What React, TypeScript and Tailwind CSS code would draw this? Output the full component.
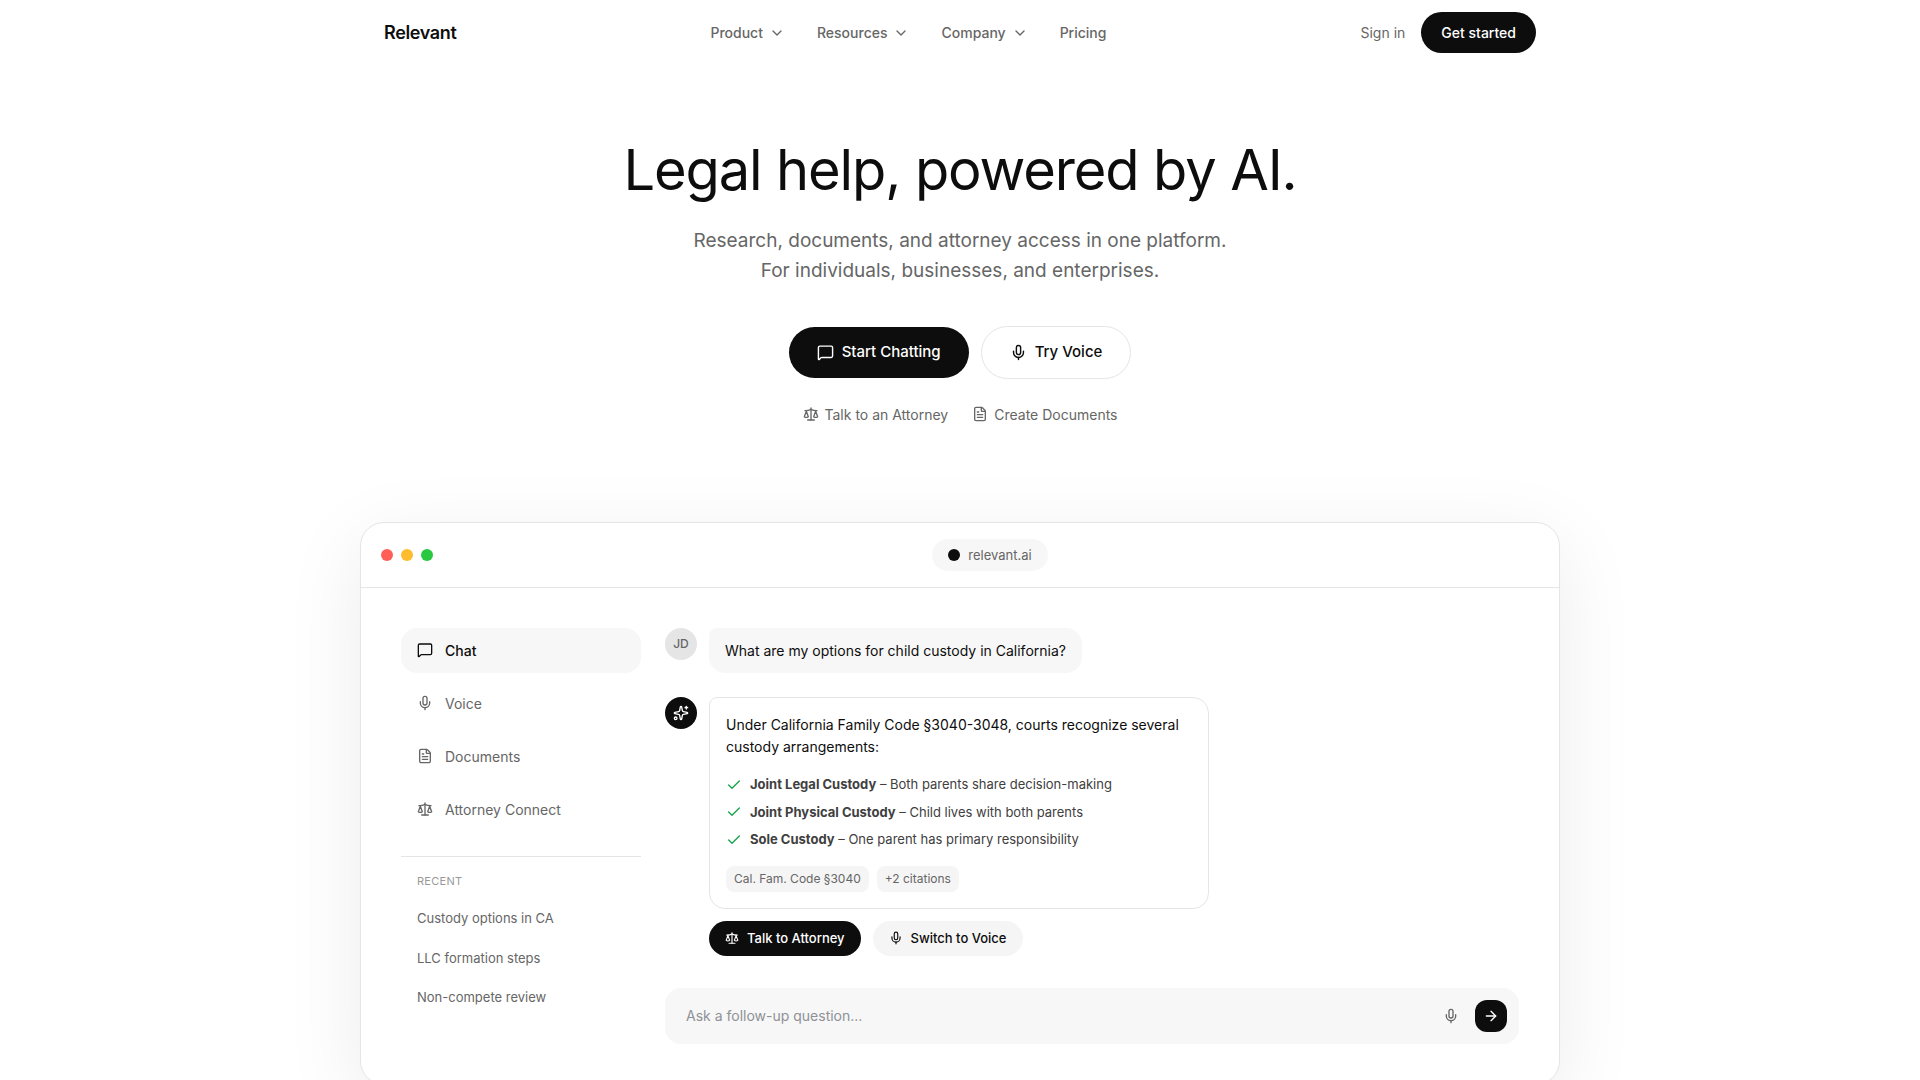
import {
  ArrowRight,
  Check,
  ChevronDown,
  FileText,
  MessageSquare,
  Mic,
  Scale,
  Sparkles,
} from "lucide-react";

const menus = ["Product", "Resources", "Company"];

const sections = [
  { label: "Chat", icon: MessageSquare, active: true },
  { label: "Voice", icon: Mic, active: false },
  { label: "Documents", icon: FileText, active: false },
  { label: "Attorney Connect", icon: Scale, active: false },
];

const recents = ["Custody options in CA", "LLC formation steps", "Non-compete review"];

const arrangements = [
  { name: "Joint Legal Custody", detail: "Both parents share decision-making" },
  { name: "Joint Physical Custody", detail: "Child lives with both parents" },
  { name: "Sole Custody", detail: "One parent has primary responsibility" },
];

function Header() {
  return (
    <header className="mx-auto flex w-full max-w-[1200px] items-center justify-between px-6 py-3">
      <a href="#" className="text-lg font-semibold tracking-[-0.02em]">
        Relevant
      </a>
      <nav className="flex items-center gap-2 text-sm font-medium text-[#666]">
        {menus.map((menu) => (
          <button key={menu} type="button" className="flex items-center gap-1.5 px-3 py-2">
            {menu}
            <ChevronDown className="size-4" />
          </button>
        ))}
        <a href="#" className="px-3 py-2">
          Pricing
        </a>
      </nav>
      <div className="flex items-center gap-4 text-sm">
        <a href="#" className="text-[#666]">
          Sign in
        </a>
        <button
          type="button"
          className="rounded-full bg-[#0d0d0d] px-5 py-2.5 leading-normal font-medium text-white"
        >
          Get started
        </button>
      </div>
    </header>
  );
}

function Hero() {
  return (
    <section className="flex flex-col items-center px-6 pt-[74px] text-center">
      <h1 className="text-[56px] leading-[62px] tracking-[-0.02em]">Legal help, powered by AI.</h1>
      <p className="mt-[25px] text-[19px] leading-[30px] text-[#666]">
        Research, documents, and attorney access in one platform.
        <br />
        For individuals, businesses, and enterprises.
      </p>
      <div className="mt-10 flex items-center gap-3 text-[15px] leading-normal font-medium">
        <button
          type="button"
          className="flex items-center gap-2 rounded-full bg-[#0d0d0d] px-7 py-3.5 text-white"
        >
          <MessageSquare className="size-[17px]" />
          Start Chatting
        </button>
        <button
          type="button"
          className="flex items-center gap-2 rounded-full border border-[#e5e5e5] px-7 py-3.5"
        >
          <Mic className="size-[17px]" />
          Try Voice
        </button>
      </div>
      <div className="mt-6 flex items-center gap-6 text-sm leading-[23px] text-[#666]">
        <a href="#" className="flex items-center gap-1.5">
          <Scale className="size-4" />
          Talk to an Attorney
        </a>
        <a href="#" className="flex items-center gap-1.5">
          <FileText className="size-4" />
          Create Documents
        </a>
      </div>
    </section>
  );
}

function Sidebar() {
  return (
    <aside className="w-60 shrink-0">
      <nav className="flex flex-col gap-2 text-sm leading-normal">
        {sections.map(({ label, icon: Icon, active }) => (
          <button
            key={label}
            type="button"
            className={
              active
                ? "flex items-center gap-3 rounded-2xl bg-[#f7f7f7] px-4 py-3 font-medium"
                : "flex items-center gap-3 rounded-2xl px-4 py-3 text-[#666]"
            }
          >
            <Icon className="size-4" />
            {label}
          </button>
        ))}
      </nav>
      <div className="mt-6 border-t border-[#e5e5e5] pt-4">
        <h2 className="px-4 text-[11px] leading-normal tracking-wide text-[#999] uppercase">
          Recent
        </h2>
        <div className="mt-3 flex flex-col gap-1 text-[13px] leading-normal text-[#666]">
          {recents.map((title) => (
            <button key={title} type="button" className="px-4 py-2 text-left">
              {title}
            </button>
          ))}
        </div>
      </div>
    </aside>
  );
}

function Conversation() {
  return (
    <div className="flex min-w-0 flex-1 flex-col">
      <div className="flex items-start gap-3">
        <span className="flex size-8 shrink-0 items-center justify-center rounded-full bg-[#e5e5e5] text-xs font-medium text-[#666]">
          JD
        </span>
        <p className="rounded-2xl rounded-tl-lg bg-[#f7f7f7] px-4 py-3 text-sm leading-normal">
          What are my options for child custody in California?
        </p>
      </div>

      <div className="mt-6 flex items-start gap-3">
        <span className="flex size-8 shrink-0 items-center justify-center rounded-full bg-[#0d0d0d] text-white">
          <Sparkles className="size-4" />
        </span>
        <div className="min-w-0 flex-1">
          <div className="max-w-[500px] rounded-2xl rounded-tl-lg border border-[#e5e5e5] p-4">
            <p className="text-sm leading-relaxed">
              Under California Family Code §3040-3048, courts recognize several custody arrangements:
            </p>
            <ul className="mt-4 flex flex-col gap-2 text-[13px] leading-normal text-[#404040]">
              {arrangements.map(({ name, detail }) => (
                <li key={name} className="flex items-center gap-2">
                  <Check className="size-4 text-[#16a34a]" />
                  <span>
                    <strong className="font-bold">{name}</strong> – {detail}
                  </span>
                </li>
              ))}
            </ul>
            <div className="mt-4 flex gap-2 text-xs leading-normal text-[#666]">
              <span className="rounded-lg bg-[#f5f5f5] px-2 py-1">Cal. Fam. Code §3040</span>
              <span className="rounded-lg bg-[#f5f5f5] px-2 py-1">+2 citations</span>
            </div>
          </div>
          <div className="mt-3 flex gap-3 text-[13px] leading-normal font-medium">
            <button
              type="button"
              className="flex items-center gap-2 rounded-full bg-[#0d0d0d] px-4 py-2 text-white"
            >
              <Scale className="size-3.5" />
              Talk to Attorney
            </button>
            <button
              type="button"
              className="flex items-center gap-2 rounded-full bg-[#f5f5f5] px-4 py-2"
            >
              <Mic className="size-3.5" />
              Switch to Voice
            </button>
          </div>
        </div>
      </div>

      <form
        className="mt-8 flex items-center gap-2 rounded-2xl bg-[#f7f7f7] py-3 pr-3 pl-[21px]"
        onSubmit={(event) => event.preventDefault()}
      >
        <input
          type="text"
          aria-label="Ask a follow-up question"
          placeholder="Ask a follow-up question..."
          className="min-w-0 flex-1 bg-transparent text-sm outline-none placeholder:text-[#8e9196]"
        />
        <button
          type="button"
          aria-label="Dictate"
          className="flex size-8 items-center justify-center text-[#666]"
        >
          <Mic className="size-4" />
        </button>
        <button
          type="submit"
          aria-label="Send"
          className="flex size-8 items-center justify-center rounded-xl bg-[#0d0d0d] text-white"
        >
          <ArrowRight className="size-4" />
        </button>
      </form>
    </div>
  );
}

function AppWindow() {
  return (
    <section className="mx-auto mt-24 w-full max-w-[1200px] overflow-hidden rounded-3xl border border-[#e5e5e5] bg-white shadow-[0_20px_80px_rgba(0,0,0,0.08)]">
      <div className="flex items-center gap-2 border-b border-[#e5e5e5] px-5 py-4">
        <div className="flex gap-2">
          <span className="size-3 rounded-full bg-[#ff5f57]" />
          <span className="size-3 rounded-full bg-[#febc2e]" />
          <span className="size-3 rounded-full bg-[#28c840]" />
        </div>
        <div className="flex flex-1 justify-center">
          <span className="flex items-center gap-2 rounded-full bg-[#f7f7f7] px-4 py-1.5 text-[13px] leading-5 text-[#666]">
            <span className="size-3 rounded-full bg-[#0d0d0d]" />
            relevant.ai
          </span>
        </div>
      </div>
      <div className="flex gap-6 p-10">
        <Sidebar />
        <Conversation />
      </div>
    </section>
  );
}

export default function App() {
  return (
    <div className="min-h-screen bg-white font-['Inter',sans-serif] text-[#0d0d0d]">
      <Header />
      <main>
        <Hero />
        <AppWindow />
      </main>
    </div>
  );
}
